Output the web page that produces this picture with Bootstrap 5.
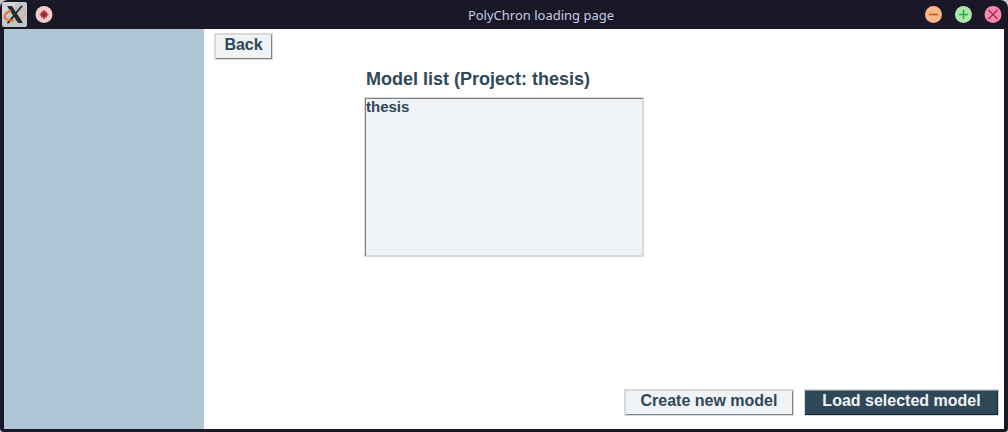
<!DOCTYPE html>
<html lang="en">
<head>
<meta charset="utf-8">
<meta name="viewport" content="width=device-width, initial-scale=1">
<title>PolyChron loading page</title>
<link href="https://cdn.jsdelivr.net/npm/bootstrap@5.3.0/dist/css/bootstrap.min.css" rel="stylesheet">
<style>
  body { background: #c4c6ca; font-family: "Liberation Sans", Arial, sans-serif; color: #2f4858; }
  .app-window { background: #1a1826; border-radius: 8px 8px 4px 4px; padding: 0 4px 3px; }
  .title-bar { height: 29px; display: grid; grid-template-columns: 1fr auto 1fr; margin: 0 -4px; color: #c5cbe6; }
  .title-bar h1 { font: 13px/20px "Noto Sans", sans-serif; padding: 5px 0 0 74px; }
  .title-bar button { width: 18px; height: 18px; }
  .title-bar svg { display: block; }
  .window-controls { gap: 12px; padding-right: 6px; }
  .side-panel { width: 20%; background: #aec6d6; }
  .tk-btn { height: 27px; border: 1px solid #d9d9d9; border-radius: 0; background: #eff3f6; color: #2f4858;
    font-size: 16px; font-weight: 700; line-height: 20px; padding: 0 0 3px;
    box-shadow: inset 1px 1px #d9d9d9, inset -1px -1px #828282; }
  .tk-btn:hover { background: #e3eaef; }
  .tk-btn-dark, .tk-btn-dark:hover { background: #2f4858; color: #eff3f6; box-shadow: inset 0 1px #7b8f9c, inset -1px -1px #182530; }
  .btn-back { width: 59px; }
  .btn-create { width: 170px; }
  .btn-load { width: 195px; }
  .top-row { padding: 4px 10px 0; }
  .model-area { margin-left: 20%; padding-top: 8px; }
  .model-area label { font-size: 18px; line-height: 22px; padding-left: 2px; margin-bottom: 7px; }
  .model-list { width: 35vw; max-width: 280px; height: 160px; appearance: none; border: 1px solid #d9d9d9; border-radius: 0;
    background: #eff3f6; color: #2f4858; font-size: 15px; padding: 0 1px; overflow: auto;
    box-shadow: inset 1px 1px #828282, inset -1px -1px #d9d9d9; outline-offset: 0; }
  .model-list option { padding: 0; min-height: 0; line-height: 14px; font-weight: 700; }
  .action-row { gap: 10px; padding: 0 5px 13px; }
</style>
</head>
<body>
<div class="app-window min-vh-100 d-flex flex-column">
  <header class="title-bar">
    <div class="d-flex align-items-center">
      <svg width="56" height="29" viewBox="0 0 56 29" aria-hidden="true">
        <rect x="2" y="2" width="25" height="25" rx="2" fill="#c2c7c7"/>
        <path d="M2 18V4a2 2 0 0 1 2-2h14Z" fill="#d3d5d5"/>
        <path d="M18 10.500c5-1 8 0 7.500 3-.6 3-5 6-10 7" fill="none" stroke="#f0a080" stroke-width="1.300"/>
        <path d="M7 6h5l11 17h-5Z" fill="#272a2e"/>
        <path d="M21 6h1.500L9 23H7Z" fill="#272a2e" stroke="#272a2e" stroke-width=".6"/>
        <path d="M11 10.500c-6 2-8 6-5 8.500 2 1.500 5 1.800 8 1.300" fill="none" stroke="#f06c30" stroke-width="2"/>
        <circle cx="44" cy="14.500" r="8.500" fill="#f2cdcd"/>
        <path d="M44 9.500 45.500 11.500h1.500V13l2 1.500-2 1.500v1.500h-1.500L44 19.500l-1.500-2H41V16l-2-1.500 2-1.500v-1.500h1.500Z" fill="#c0454c"/>
        <path d="M44 12v5M41.500 14.500h5" stroke="#8a1f28" stroke-width="1.500"/>
      </svg>
    </div>
    <h1 class="m-0">PolyChron loading page</h1>
    <div class="window-controls d-flex justify-content-end align-items-center">
      <button type="button" class="border-0 p-0 bg-transparent" aria-label="Minimize"><svg width="18" height="18" viewBox="0 0 18 18"><circle cx="9.500" cy="8.500" r="8.500" fill="#fab68a"/><path d="M5 8.500h9" stroke="#c45508" stroke-width="1.500"/></svg></button>
      <button type="button" class="border-0 p-0 bg-transparent" aria-label="Maximize"><svg width="18" height="18" viewBox="0 0 18 18"><circle cx="9.500" cy="8.500" r="8.500" fill="#a9e8a9"/><path d="M5 8.500h9M9.500 4v9" stroke="#27a53a" stroke-width="1.500"/></svg></button>
      <button type="button" class="border-0 p-0 bg-transparent" aria-label="Close"><svg width="18" height="18" viewBox="0 0 18 18"><circle cx="9" cy="8.500" r="8.500" fill="#f38bab"/><path d="m4.500 4 9 9m0-9-9 9" stroke="#b02a55" stroke-width="1.500"/></svg></button>
    </div>
  </header>
  <div class="d-flex flex-grow-1">
    <aside class="side-panel flex-shrink-0"></aside>
    <main class="flex-grow-1 bg-white d-flex flex-column">
      <div class="top-row d-flex"><button type="button" class="btn tk-btn btn-back">Back</button></div>
      <div class="model-area">
        <label for="models" class="d-block fw-bold">Model list (Project: thesis)</label>
        <select id="models" class="model-list d-block" size="8"><option>thesis</option></select>
      </div>
      <div class="action-row d-flex justify-content-end mt-auto">
        <button type="button" class="btn tk-btn btn-create">Create new model</button>
        <button type="button" class="btn tk-btn tk-btn-dark btn-load">Load selected model</button>
      </div>
    </main>
  </div>
</div>
<script src="https://cdn.jsdelivr.net/npm/bootstrap@5.3.0/dist/js/bootstrap.bundle.min.js"></script>
</body>
</html>
